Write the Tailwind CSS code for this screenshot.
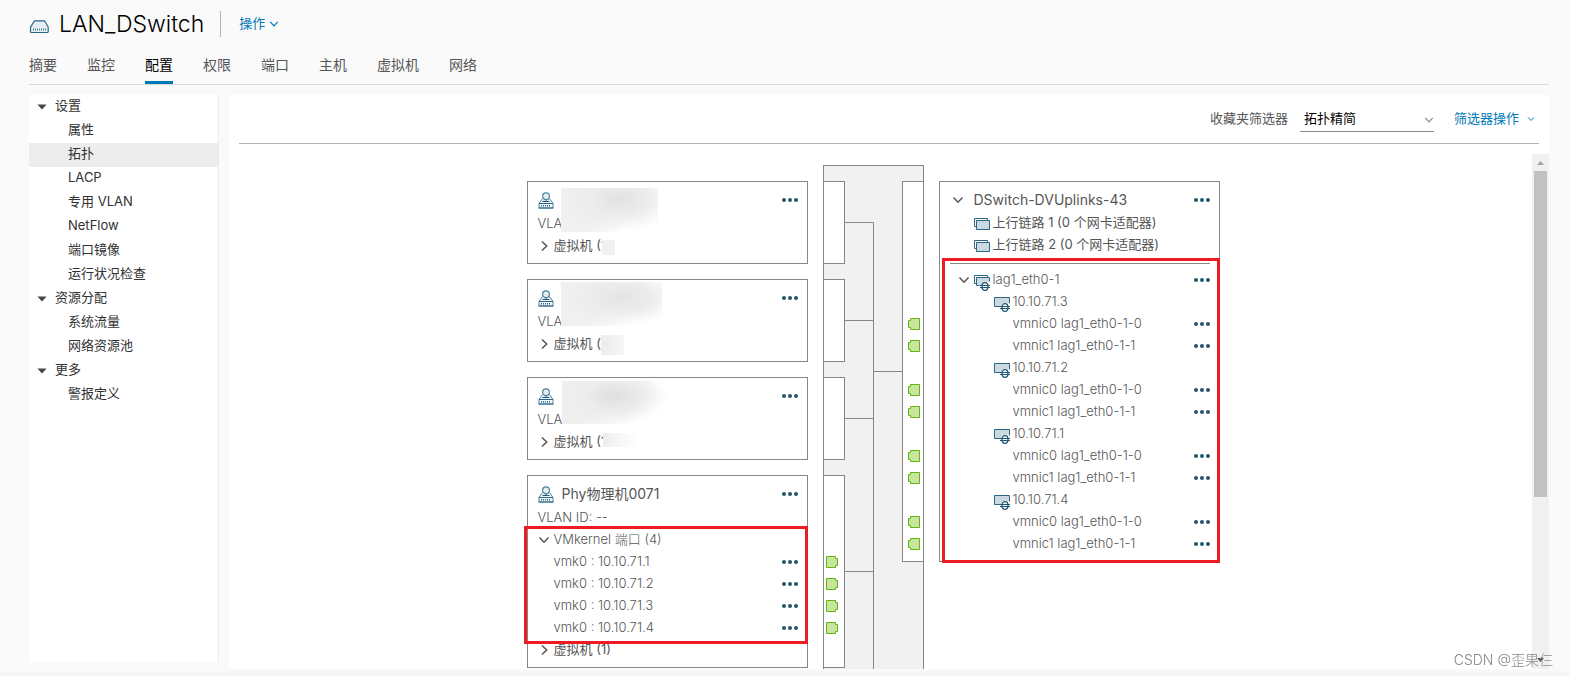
<!DOCTYPE html>
<html lang="zh-CN">
<head>
  <meta charset="UTF-8" />
  <meta name="viewport" content="width=device-width, initial-scale=1.0" />
  <title>LAN_DSwitch - 拓扑</title>
  <script src="https://cdn.jsdelivr.net/npm/@tailwindcss/browser@4"></script>
</head>
<body class="h-screen overflow-hidden flex flex-col bg-[#fafafa] text-[#565656] text-[13px] font-['Inter','Noto_Sans_CJK_SC',sans-serif] font-light">

  <!-- Shared icons -->
  <svg class="hidden">
    <symbol id="dots" viewBox="0 0 18 6"><circle cx="3" cy="3" r="2" fill="#25566e"/><circle cx="9" cy="3" r="2" fill="#25566e"/><circle cx="15" cy="3" r="2" fill="#25566e"/></symbol>
    <symbol id="down" viewBox="0 0 12 12"><path d="M1.5 3.5L6 8.2L10.5 3.5" fill="none" stroke="currentColor" stroke-width="1.5"/></symbol>
    <symbol id="right" viewBox="0 0 12 12"><path d="M4 1.5L8.7 6L4 10.5" fill="none" stroke="currentColor" stroke-width="1.5"/></symbol>
    <symbol id="caret" viewBox="0 0 10 6"><path d="M0.5 0.5h9L5 5.5z" fill="#454545"/></symbol>
    <symbol id="portgroup" viewBox="0 0 16 17">
      <path d="M4.500 6.500L1.500 11v5h13v-5L11.500 6.500z" fill="#f3f7f9"/>
      <path d="M4.500 6.500L1 11.500v4.500h14v-4.500L11.500 6.500" fill="none" stroke="#4d84a0"/>
      <path d="M0.500 16h15M1 11.500h14" stroke="#2b6686"/>
      <path d="M3 13.800h10" stroke="#2b6686" stroke-width="1.500" stroke-dasharray="1 1"/>
      <path d="M8 7.500v2M4.500 9.500h7" stroke="#1f5673"/>
      <circle cx="8" cy="4.200" r="3.400" fill="#e6eef2" stroke="#4d84a0" stroke-width="1.200"/>
    </symbol>
    <symbol id="uplink" viewBox="0 0 17 13">
      <path d="M2.500 9.500H0.500V1.500H13.500V3" fill="none" stroke="#2b6686"/>
      <path d="M2.500 3.500h13v9h-13z" fill="#cbd9e1" stroke="#2b6686"/>
    </symbol>
    <symbol id="lag" viewBox="0 0 17 17">
      <path d="M3 9.500H0.500V1.500H13.500V3" fill="none" stroke="#2b6686"/>
      <path d="M8 11.500H2.500V3.500h13V8H11L8 10z" fill="#cbd9e1"/>
      <path d="M5.500 11.500H2.500V3.500h13V7.500" fill="none" stroke="#2b6686"/>
      <ellipse cx="11" cy="12.500" rx="3" ry="3.800" fill="#fff" stroke="#1f5673" stroke-width="1.300"/>
      <path d="M6 11.500h10M6 13.500h10" stroke="#1f5673"/>
    </symbol>
    <symbol id="host" viewBox="0 0 17 17">
      <path d="M7 10.500H0.500V1.500H15.500V7H11L7 10z" fill="#cbd9e1"/>
      <path d="M6 10.500H0.500V1.500H15.500V7.500" fill="none" stroke="#2b6686"/>
      <ellipse cx="11" cy="11.500" rx="3" ry="3.800" fill="#fff" stroke="#1f5673" stroke-width="1.300"/>
      <path d="M6 10.500h10M6 12.500h10" stroke="#1f5673"/>
    </symbol>
    <symbol id="portL" viewBox="0 0 12 12"><path d="M0.500 0.500h9v2h2v7h-2v2h-9z" fill="#c7e59c" stroke="#60b515"/></symbol>
    <symbol id="portR" viewBox="0 0 12 12"><path d="M11.500 0.500h-9v2h-2v7h2v2h9z" fill="#c7e59c" stroke="#60b515"/></symbol>
  </svg>

  <!-- Header -->
  <header class="pl-7 pr-5">
    <div class="flex items-center h-12">
      <svg class="w-5 h-4 mt-2 ml-px" viewBox="0 0 20 16" fill="none">
        <path d="M5.500 0.800h10L19.200 7v4.500q0 1-1 1H2.500q-1 0-1-1V7z" fill="#e6eef2" stroke="#2b6686" stroke-width="1.200" stroke-linejoin="round"/>
        <path d="M4 9.500h13" stroke="#4d84a0" stroke-width="2" stroke-dasharray="1 1"/>
      </svg>
      <h1 class="ml-2.5 text-[23px] font-light text-black">LAN_DSwitch</h1>
      <div class="ml-4 w-px h-[26px] bg-[#b3b3b3]"></div>
      <button class="ml-[18px] flex items-center gap-1 text-[#0079b8] font-normal">操作 <svg class="w-2.5 h-2.5"><use href="#down"/></svg></button>
    </div>
    <nav class="flex gap-[30px] h-[37px] ml-px border-b border-[#d9d9d9] text-sm font-normal">
      <a href="#" class="pt-[7px]">摘要</a>
      <a href="#" class="pt-[7px]">监控</a>
      <a href="#" class="pt-[7px] border-b-3 border-[#0079b8] text-black">配置</a>
      <a href="#" class="pt-[7px]">权限</a>
      <a href="#" class="pt-[7px]">端口</a>
      <a href="#" class="pt-[7px]">主机</a>
      <a href="#" class="pt-[7px]">虚拟机</a>
      <a href="#" class="pt-[7px]">网络</a>
    </nav>
  </header>

  <div class="flex-1 min-h-0 flex gap-2.5 pl-[29px] pr-5 pt-2.5">
    <!-- Sidebar -->
    <nav class="w-[190px] shrink-0 mb-1.5 bg-white border-r border-[#ececec] text-[#313131] font-normal leading-[21px]">
      <details open>
        <summary class="flex gap-2 pl-2 h-6"><svg class="w-2.5 h-1.5 mt-[9px]"><use href="#caret"/></svg>设置</summary>
        <a href="#" class="block pl-[39px] h-6">属性</a>
        <a href="#" class="block pl-[39px] h-6 bg-[#ededed]">拓扑</a>
        <a href="#" class="block pl-[39px] h-6">LACP</a>
        <a href="#" class="block pl-[39px] h-6">专用 VLAN</a>
        <a href="#" class="block pl-[39px] h-6">NetFlow</a>
        <a href="#" class="block pl-[39px] h-6">端口镜像</a>
        <a href="#" class="block pl-[39px] h-6">运行状况检查</a>
      </details>
      <details open>
        <summary class="flex gap-2 pl-2 h-6"><svg class="w-2.5 h-1.5 mt-[9px]"><use href="#caret"/></svg>资源分配</summary>
        <a href="#" class="block pl-[39px] h-6">系统流量</a>
        <a href="#" class="block pl-[39px] h-6">网络资源池</a>
      </details>
      <details open>
        <summary class="flex gap-2 pl-2 h-6"><svg class="w-2.5 h-1.5 mt-[9px]"><use href="#caret"/></svg>更多</summary>
        <a href="#" class="block pl-[39px] h-6">警报定义</a>
      </details>
    </nav>

    <!-- Topology panel -->
    <main class="flex-1 min-w-0 flex flex-col bg-white">
      <div class="mx-2.5 h-[49px] flex items-center justify-end border-b border-[#b3b3b3]">
        <label for="filter" class="font-normal">收藏夹筛选器</label>
        <div class="relative ml-3">
          <select id="filter" class="appearance-none block w-[134px] h-[26px] pl-1 bg-transparent border-b border-[#8c8c8c] text-black font-normal">
            <option>拓扑精简</option>
          </select>
          <svg class="absolute right-0 top-2 w-2.5 h-3 text-[#8c8c8c] pointer-events-none"><use href="#down"/></svg>
        </div>
        <button class="ml-5 mr-1 flex items-center gap-2 text-[#0079b8] font-normal">筛选器操作 <svg class="w-2 h-2"><use href="#down"/></svg></button>
      </div>

      <div class="flex-1 min-h-0 mt-2.5 flex">
        <div class="flex-1 overflow-hidden flex justify-center gap-[15px] pr-[15px]">

          <!-- Port groups -->
          <div class="w-[281px] shrink-0 pt-[27px] flex flex-col gap-[15px]">
            <section class="relative shrink-0 border border-[#868686] py-1.5 pl-2.5 pr-2">
              <div class="flex items-center h-6"><svg class="w-4 h-[17px]"><use href="#portgroup"/></svg><button class="ml-auto" aria-label="更多"><svg class="w-[18px] h-1.5"><use href="#dots"/></svg></button></div>
              <div class="leading-[23px]">VLA</div>
              <button class="flex items-center gap-1 h-[22px] font-normal"><svg class="w-3 h-3"><use href="#right"/></svg>虚拟机 (1</button>
              <div class="absolute left-[33px] top-1.5 w-[97px] h-11 bg-[radial-gradient(ellipse_at_60%_25%,#e2e2e2,#ececec_35%,transparent_70%),linear-gradient(120deg,#f0f0f0_40%,#fff_72%)]"></div>
              <div class="absolute left-[74px] top-[58px] w-[13px] h-[15px] bg-[#f1f1f1]"></div>
            </section>
            <section class="relative shrink-0 border border-[#868686] py-1.5 pl-2.5 pr-2">
              <div class="flex items-center h-6"><svg class="w-4 h-[17px]"><use href="#portgroup"/></svg><button class="ml-auto" aria-label="更多"><svg class="w-[18px] h-1.5"><use href="#dots"/></svg></button></div>
              <div class="leading-[23px]">VLA</div>
              <button class="flex items-center gap-1 h-[22px] font-normal"><svg class="w-3 h-3"><use href="#right"/></svg>虚拟机 (</button>
              <div class="absolute left-[33px] top-0.5 w-[101px] h-11 bg-[radial-gradient(ellipse_at_60%_35%,#e4e4e4,#ececec_35%,transparent_70%),linear-gradient(120deg,#f0f0f0_40%,#fff_75%)]"></div>
              <div class="absolute left-[73px] top-[55px] w-[23px] h-5 bg-linear-to-r from-[#ededed] to-[#f6f6f6]"></div>
            </section>
            <section class="relative shrink-0 border border-[#868686] py-1.5 pl-2.5 pr-2">
              <div class="flex items-center h-6"><svg class="w-4 h-[17px]"><use href="#portgroup"/></svg><button class="ml-auto" aria-label="更多"><svg class="w-[18px] h-1.5"><use href="#dots"/></svg></button></div>
              <div class="leading-[23px]">VLA</div>
              <button class="flex items-center gap-1 h-[22px] font-normal"><svg class="w-3 h-3"><use href="#right"/></svg>虚拟机 (1</button>
              <div class="absolute left-[34px] top-[3px] w-[105px] h-[43px] bg-[radial-gradient(ellipse_at_50%_35%,#dfdfdf,#ececec_38%,transparent_72%),linear-gradient(120deg,#efefef_35%,#fff_75%)]"></div>
              <div class="absolute left-[75px] top-[55px] w-[34px] h-3.5 bg-linear-to-r from-[#ededed] to-white"></div>
            </section>
            <section class="relative shrink-0 border border-[#868686] py-1.5 pl-2.5 pr-2">
              <div class="flex items-center h-6"><svg class="w-4 h-[17px]"><use href="#portgroup"/></svg><h2 class="ml-2 text-sm font-normal">Phy物理机0071</h2><button class="ml-auto" aria-label="更多"><svg class="w-[18px] h-1.5"><use href="#dots"/></svg></button></div>
              <div class="leading-[23px]">VLAN ID: --</div>
              <button class="flex items-center gap-1 h-[22px]"><svg class="w-3 h-3"><use href="#down"/></svg>VMkernel 端口 (4)</button>
              <ul class="pl-4">
                <li class="flex items-center h-[22px]">vmk0 : 10.10.71.1<button class="ml-auto" aria-label="更多"><svg class="w-[18px] h-1.5"><use href="#dots"/></svg></button></li>
                <li class="flex items-center h-[22px]">vmk0 : 10.10.71.2<button class="ml-auto" aria-label="更多"><svg class="w-[18px] h-1.5"><use href="#dots"/></svg></button></li>
                <li class="flex items-center h-[22px]">vmk0 : 10.10.71.3<button class="ml-auto" aria-label="更多"><svg class="w-[18px] h-1.5"><use href="#dots"/></svg></button></li>
                <li class="flex items-center h-[22px]">vmk0 : 10.10.71.4<button class="ml-auto" aria-label="更多"><svg class="w-[18px] h-1.5"><use href="#dots"/></svg></button></li>
              </ul>
              <button class="flex items-center gap-1 h-[22px] font-normal"><svg class="w-3 h-3"><use href="#right"/></svg>虚拟机 (1)</button>
              <div class="absolute -left-1 top-[50px] w-[284px] h-[118px] border-3 border-[#ed1c24] pointer-events-none"></div>
            </section>
          </div>

          <!-- Switch with ports and links -->
          <svg class="w-[101px] h-[600px] mt-[11px] shrink-0" viewBox="0 0 101 600" fill="none" stroke="#868686">
            <rect x="0.500" y="0.500" width="100" height="620" fill="#f1f1f1"/>
            <rect x="0.500" y="16.500" width="21" height="82" fill="#fff"/>
            <rect x="0.500" y="114.500" width="21" height="82" fill="#fff"/>
            <rect x="0.500" y="212.500" width="21" height="82" fill="#fff"/>
            <rect x="0.500" y="310.500" width="21" height="192" fill="#fff"/>
            <rect x="79.500" y="16.500" width="21" height="380" fill="#fff"/>
            <path d="M21.500 57.500H50.500V600M21.500 155.500H50.500M21.500 253.500H50.500M21.500 406.500H50.500M50.500 206.500H79.500"/>
            <use href="#portL" x="3" y="391" width="12" height="12"/>
            <use href="#portL" x="3" y="413" width="12" height="12"/>
            <use href="#portL" x="3" y="435" width="12" height="12"/>
            <use href="#portL" x="3" y="457" width="12" height="12"/>
            <use href="#portR" x="85" y="153" width="12" height="12"/>
            <use href="#portR" x="85" y="175" width="12" height="12"/>
            <use href="#portR" x="85" y="219" width="12" height="12"/>
            <use href="#portR" x="85" y="241" width="12" height="12"/>
            <use href="#portR" x="85" y="285" width="12" height="12"/>
            <use href="#portR" x="85" y="307" width="12" height="12"/>
            <use href="#portR" x="85" y="351" width="12" height="12"/>
            <use href="#portR" x="85" y="373" width="12" height="12"/>
          </svg>

          <!-- Uplinks -->
          <div class="w-[281px] shrink-0 pt-[27px]">
            <section class="relative border border-[#868686] py-1.5 pl-3 pr-2">
              <div class="flex items-center h-6"><svg class="w-3 h-3"><use href="#down"/></svg><h2 class="ml-2.5 text-sm font-normal">DSwitch-DVUplinks-43</h2><button class="ml-auto" aria-label="更多"><svg class="w-[18px] h-1.5"><use href="#dots"/></svg></button></div>
              <div class="flex items-center gap-0.5 pl-[22px] h-[22px] font-normal"><svg class="w-[17px] h-[13px]"><use href="#uplink"/></svg>上行链路 1 (0 个网卡适配器)</div>
              <div class="flex items-center gap-0.5 pl-[22px] h-[22px] font-normal"><svg class="w-[17px] h-[13px]"><use href="#uplink"/></svg>上行链路 2 (0 个网卡适配器)</div>
              <hr class="mt-[7px] mb-[5px] -ml-0.5 mr-px border-[#868686]" />
              <div class="flex items-center h-[22px] pl-1.5"><svg class="w-3 h-3"><use href="#down"/></svg><svg class="w-[17px] h-[17px] ml-1 mt-1 mr-0.5"><use href="#lag"/></svg>lag1_eth0-1<button class="ml-auto" aria-label="更多"><svg class="w-[18px] h-1.5"><use href="#dots"/></svg></button></div>

              <div class="flex items-center gap-0.5 pl-[42px] h-[22px]"><svg class="w-[17px] h-[17px] mt-1"><use href="#host"/></svg>10.10.71.3</div>
              <div class="flex items-center pl-[61px] h-[22px]">vmnic0 lag1_eth0-1-0<button class="ml-auto" aria-label="更多"><svg class="w-[18px] h-1.5"><use href="#dots"/></svg></button></div>
              <div class="flex items-center pl-[61px] h-[22px]">vmnic1 lag1_eth0-1-1<button class="ml-auto" aria-label="更多"><svg class="w-[18px] h-1.5"><use href="#dots"/></svg></button></div>

              <div class="flex items-center gap-0.5 pl-[42px] h-[22px]"><svg class="w-[17px] h-[17px] mt-1"><use href="#host"/></svg>10.10.71.2</div>
              <div class="flex items-center pl-[61px] h-[22px]">vmnic0 lag1_eth0-1-0<button class="ml-auto" aria-label="更多"><svg class="w-[18px] h-1.5"><use href="#dots"/></svg></button></div>
              <div class="flex items-center pl-[61px] h-[22px]">vmnic1 lag1_eth0-1-1<button class="ml-auto" aria-label="更多"><svg class="w-[18px] h-1.5"><use href="#dots"/></svg></button></div>

              <div class="flex items-center gap-0.5 pl-[42px] h-[22px]"><svg class="w-[17px] h-[17px] mt-1"><use href="#host"/></svg>10.10.71.1</div>
              <div class="flex items-center pl-[61px] h-[22px]">vmnic0 lag1_eth0-1-0<button class="ml-auto" aria-label="更多"><svg class="w-[18px] h-1.5"><use href="#dots"/></svg></button></div>
              <div class="flex items-center pl-[61px] h-[22px]">vmnic1 lag1_eth0-1-1<button class="ml-auto" aria-label="更多"><svg class="w-[18px] h-1.5"><use href="#dots"/></svg></button></div>

              <div class="flex items-center gap-0.5 pl-[42px] h-[22px]"><svg class="w-[17px] h-[17px] mt-1"><use href="#host"/></svg>10.10.71.4</div>
              <div class="flex items-center pl-[61px] h-[22px]">vmnic0 lag1_eth0-1-0<button class="ml-auto" aria-label="更多"><svg class="w-[18px] h-1.5"><use href="#dots"/></svg></button></div>
              <div class="flex items-center pl-[61px] h-[22px]">vmnic1 lag1_eth0-1-1<button class="ml-auto" aria-label="更多"><svg class="w-[18px] h-1.5"><use href="#dots"/></svg></button></div>
              <div class="absolute left-0.5 top-[76px] w-[278px] h-[305px] border-3 border-[#ed1c24] pointer-events-none"></div>
            </section>
          </div>
        </div>

        <!-- Scrollbar -->
        <div class="w-[17px] shrink-0 bg-[#f0f0f0] flex flex-col items-center">
          <svg class="w-[17px] h-[17px] shrink-0" viewBox="0 0 17 17"><path d="M5 11h7L8.500 7z" fill="#a3a3a3"/></svg>
          <div class="w-[13px] h-[326px] bg-[#c1c1c1]"></div>
          <svg class="w-[17px] h-[17px] shrink-0 mt-auto" viewBox="0 0 17 17"><path d="M5 6h7L8.500 10z" fill="#505050"/></svg>
        </div>
      </div>
    </main>
  </div>

  <footer class="h-[7px] shrink-0 bg-linear-to-b from-[#fafafa] to-[#f3f3f3]"></footer>
  <div class="fixed right-4 bottom-1.5 text-sm leading-5 text-[#888888]">CSDN @歪果仨</div>
</body>
</html>
